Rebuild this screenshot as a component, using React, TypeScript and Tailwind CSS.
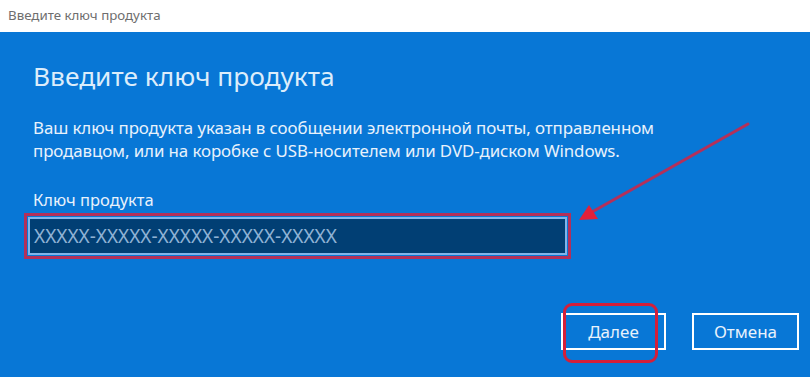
import React from 'react';

const font = { fontFamily: '"Noto Sans", "Open Sans", sans-serif' };

const App = () => {
  return (
    <div className="relative flex h-[377px] w-[810px] flex-col overflow-hidden" style={font}>
      {/* window caption */}
      <div className="flex h-[32px] items-center bg-white px-[8px] text-[13.3px] text-[#6e6e6e]">
        Введите ключ продукта
      </div>

      <div className="flex flex-1 flex-col bg-[#0877d6] pl-[33px] pr-[11px] text-[#e8f2fc]">
        <h1 className="mt-[24px] text-[26.3px] leading-[40px] font-normal text-[#dcedfb]">
          Введите ключ продукта
        </h1>
        <p className="mt-[20px] text-[16.9px] leading-[23px] tracking-[-0.1px]">
          Ваш ключ продукта указан в сообщении электронной почты, отправленном
          <br />
          продавцом, или на коробке с USB-носителем или DVD-диском Windows.
        </p>
        <label className="mt-[26px] text-[16.5px] leading-[24px]">Ключ продукта</label>

        <div className="mt-[1px] -ml-[9px] w-[547px] border-[3px] border-[#b2305a] p-px">
          <div className="flex h-[38px] items-center border-2 border-[#7fb4ea] bg-[#013f74] pl-[4px] text-[19px] text-[#8fb2d4]">
            XXXXX-XXXXX-XXXXX-XXXXX-XXXXX
          </div>
        </div>

        <div className="mt-[54px] flex justify-end gap-[26px]">
          <div className="relative">
            <button className="h-[37px] w-[105px] border-2 border-white text-[17px] text-[#e8f2fc]">
              Далее
            </button>
            <div className="pointer-events-none absolute -top-[10px] left-[2px] h-[60px] w-[95px] rounded-[9px] border-[3px] border-[#d41f3a]" />
          </div>
          <button className="h-[37px] w-[107px] border-2 border-white text-[17px] text-[#e8f2fc]">
            Отмена
          </button>
        </div>
      </div>

      {/* annotation arrow */}
      <svg className="pointer-events-none absolute left-0 top-0" width="810" height="377">
        <line x1="748" y1="124" x2="592" y2="212" stroke="#b4305a" strokeWidth="3" strokeLinecap="round" />
        <polygon points="579,220 589,205 598,219" fill="#e3203a" />
      </svg>
    </div>
  );
};

export default App;
